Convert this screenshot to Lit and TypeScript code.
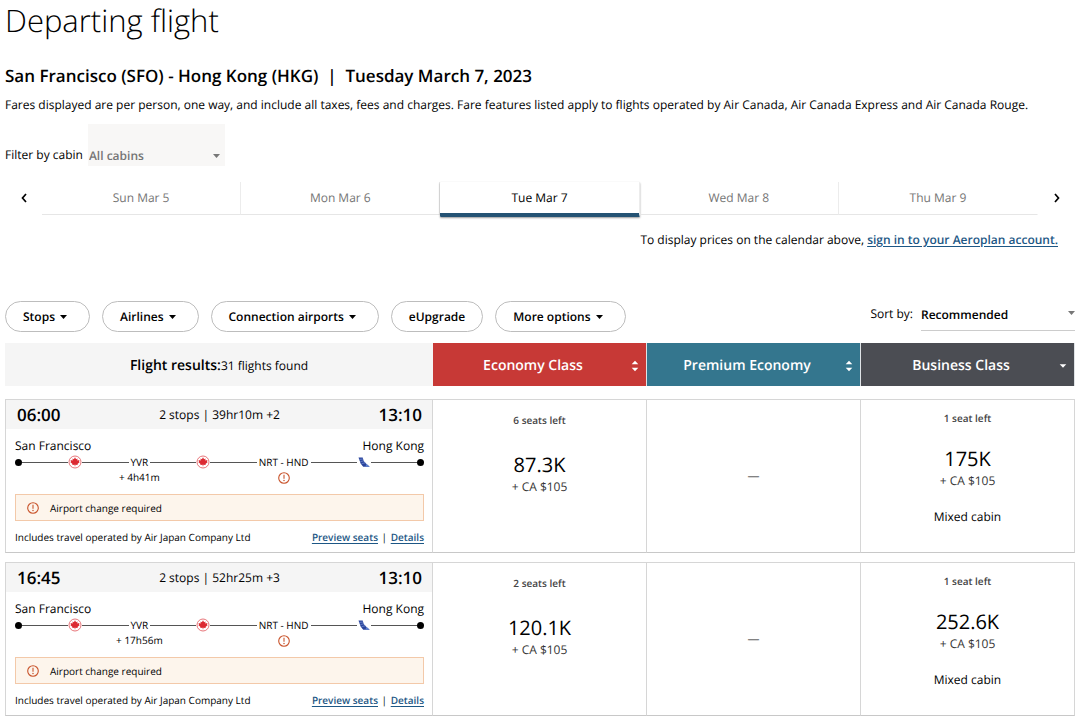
import { LitElement, html, css, svg, nothing } from "lit";
import { customElement, property, state } from "lit/decorators.js";
import { classMap } from "lit/directives/class-map.js";

interface Fare {
  seats: string;
  points: string;
  cash: string;
  mixed?: boolean;
}

interface Flight {
  depart: string;
  arrive: string;
  summary: string;
  layover: string;
  fares: (Fare | null)[];
}

const FLIGHTS: Flight[] = [
  {
    depart: "06:00",
    arrive: "13:10",
    summary: "2 stops | 39hr10m +2",
    layover: "+ 4h41m",
    fares: [
      { seats: "6 seats left", points: "87.3K", cash: "+ CA $105" },
      null,
      { seats: "1 seat left", points: "175K", cash: "+ CA $105", mixed: true },
    ],
  },
  {
    depart: "16:45",
    arrive: "13:10",
    summary: "2 stops | 52hr25m +3",
    layover: "+ 17h56m",
    fares: [
      { seats: "2 seats left", points: "120.1K", cash: "+ CA $105" },
      null,
      { seats: "1 seat left", points: "252.6K", cash: "+ CA $105", mixed: true },
    ],
  },
];

const DAYS = ["Sun Mar 5", "Mon Mar 6", "Tue Mar 7", "Wed Mar 8", "Thu Mar 9"];

const FILTERS = [
  { label: "Stops", menu: true },
  { label: "Airlines", menu: true },
  { label: "Connection airports", menu: true },
  { label: "eUpgrade", menu: false },
  { label: "More options", menu: true },
];

const CABINS = [
  { label: "Economy Class", tone: "economy", both: true },
  { label: "Premium Economy", tone: "premium", both: true },
  { label: "Business Class", tone: "business", both: false },
];

const caret = html`<svg class="caret" viewBox="0 0 7 4" width="7" height="4" aria-hidden="true">
  <path d="M0 0h7L3.5 4z" fill="currentColor" />
</svg>`;

const alertIcon = html`<svg class="alert" viewBox="0 0 12 12" width="12" height="12" aria-hidden="true">
  <circle cx="6" cy="6" r="5.3" fill="none" stroke="#c9542c" stroke-width="1.1" />
  <path d="M6 2.8v4" stroke="#c9542c" stroke-width="1.1" />
  <circle cx="6" cy="8.6" r=".75" fill="#c9542c" />
</svg>`;

const mapleIcon = html`<svg class="carrier" viewBox="0 0 14 14" width="14" height="14" role="img" aria-label="Air Canada">
  <circle cx="7" cy="7" r="6" fill="#fff" stroke="#e4666b" stroke-width=".9" />
  <path
    fill="#dc2a32"
    d="M7 2.2L8.100 4.300L9.500 3.400L9.300 5.500L11.500 4.900L10.900 6.400L11.800 7L9.500 9L9.700 10.100L7.300 9.700V11.300H6.700V9.700L4.300 10.100L4.500 9L2.200 7L3.100 6.400L2.500 4.900L4.700 5.500L4.500 3.400L5.900 4.300z"
  />
</svg>`;

const tailIcon = html`<svg class="carrier" viewBox="0 0 14 14" width="14" height="14" role="img" aria-label="ANA">
  <path d="M1.500 2.500h4.200l1 3.600 2.500 2.700 3.500 2.900H6.200L3.600 8.600z" fill="#2a449c" />
  <path d="M2.400 4.400l3.500-.4M3.300 6.600l3.600-.8M4.500 8.700l4-1" stroke="#8aa5e0" stroke-width=".6" />
  <path d="M9.200 8.800l3.500 2.900H8.600z" fill="#5b7fd0" />
</svg>`;

const base = css`
  * {
    box-sizing: border-box;
  }
  button,
  select {
    font: inherit;
    color: inherit;
    margin: 0;
    padding: 0;
    border: 0;
    border-radius: 0;
    background: none;
    cursor: pointer;
    text-rendering: inherit;
  }
  a {
    color: #1d5785;
    font-weight: 600;
    text-underline-offset: 2px;
  }
  svg {
    display: block;
    flex: none;
  }
`;

@customElement("flight-itinerary")
export class FlightItinerary extends LitElement {
  @property({ attribute: false }) flight!: Flight;

  static styles = [
    base,
    css`
      :host {
        display: block;
        font-size: 12px;
        line-height: 16px;
      }
      .times {
        display: grid;
        grid-template-columns: 1fr auto 1fr;
        align-items: center;
        height: 29px;
        padding: 0 10px 0 11px;
        background: #f5f5f5;
      }
      .clock {
        font-size: 17px;
        font-weight: 600;
      }
      .arrive {
        text-align: right;
      }
      .body {
        padding: 9px 8px 6px 9px;
      }
      .cities,
      .foot {
        display: flex;
        justify-content: space-between;
      }
      .route {
        display: flex;
        align-items: flex-start;
        height: 40px;
        font-size: 10px;
      }
      .carrier {
        margin-top: 1px;
      }
      .dot {
        flex: none;
        width: 7px;
        height: 7px;
        margin-top: 5px;
        border-radius: 50%;
        background: #000;
      }
      .line {
        flex: 1;
        height: 1px;
        margin-top: 8px;
        background: #555;
      }
      .stop {
        display: flex;
        flex-direction: column;
        align-items: center;
        padding: 0 2px;
        white-space: nowrap;
      }
      .layover {
        margin: -1px -20px 0;
      }
      .stop .alert {
        margin-top: 2px;
      }
      .notice {
        display: flex;
        align-items: center;
        gap: 11px;
        height: 27px;
        padding: 0 11px;
        border: 1px solid #f3c9a9;
        background: #fdf5ec;
        font-size: 10px;
      }
      .foot {
        margin-top: 8px;
        font-size: 10px;
      }
      .sep {
        padding: 0 1px;
      }
    `,
  ];

  render() {
    const f = this.flight;
    return html`
      <div class="times">
        <span class="clock">${f.depart}</span>
        <span>${f.summary}</span>
        <span class="clock arrive">${f.arrive}</span>
      </div>
      <div class="body">
        <div class="cities"><span>San Francisco</span><span>Hong Kong</span></div>
        <div class="route">
          <span class="dot"></span><span class="line"></span>${mapleIcon}<span class="line"></span>
          <span class="stop">YVR<span class="layover">${f.layover}</span></span>
          <span class="line"></span>${mapleIcon}<span class="line"></span>
          <span class="stop">NRT - HND${alertIcon}</span>
          <span class="line"></span>${tailIcon}<span class="line"></span><span class="dot"></span>
        </div>
        <div class="notice">${alertIcon}<span>Airport change required</span></div>
        <div class="foot">
          <span>Includes travel operated by Air Japan Company Ltd</span>
          <span><a href="#seats">Preview seats</a><span class="sep"> | </span><a href="#details">Details</a></span>
        </div>
      </div>
    `;
  }
}

@customElement("fare-offer")
export class FareOffer extends LitElement {
  @property({ attribute: false }) fare: Fare | null = null;

  static styles = [
    base,
    css`
      :host {
        display: block;
      }
      .offer {
        display: flex;
        flex-direction: column;
        align-items: center;
        width: 100%;
        padding-top: 12px;
      }
      .mixed {
        padding-top: 10px;
      }
      .seats {
        color: #444;
        font-size: 10px;
        font-weight: 600;
        line-height: 16px;
      }
      .points {
        margin-top: 23px;
        font-size: 20px;
        line-height: 28px;
      }
      .mixed .points {
        margin-top: 19px;
      }
      .cash {
        color: #333;
        font-size: 12px;
        line-height: 16px;
      }
      .cabin {
        margin-top: 20px;
        font-size: 12px;
        line-height: 16px;
      }
      .none {
        display: block;
        color: #666;
        font-size: 12px;
        text-align: center;
      }
    `,
  ];

  render() {
    const f = this.fare;
    if (!f) return html`<span class="none">—</span>`;
    return html`<button class=${classMap({ offer: true, mixed: !!f.mixed })}>
      <span class="seats">${f.seats}</span>
      <span class="points">${f.points}</span>
      <span class="cash">${f.cash}</span>
      ${f.mixed ? html`<span class="cabin">Mixed cabin</span>` : nothing}
    </button>`;
  }
}

@customElement("app-root")
export class AppRoot extends LitElement {
  @state() private day = 2;

  static styles = [
    base,
    css`
      :host {
        display: block;
        padding: 0 5px;
        background: #fff;
        color: #000;
        font-family: "Open Sans", "Noto Sans", sans-serif;
        font-size: 12px;
        line-height: 18px;
        text-rendering: geometricPrecision;
      }
      h1 {
        margin: 0;
        font-size: 31px;
        font-weight: 300;
        line-height: 42px;
      }
      h2 {
        margin: 22px 0 8px;
        font-size: 17px;
        font-weight: 600;
        line-height: 24px;
        white-space: pre-wrap;
      }
      p {
        margin: 0;
      }
      .cabin {
        display: flex;
        align-items: flex-end;
        gap: 5px;
        margin-top: 10px;
      }
      .cabin label {
        margin-bottom: 2px;
      }
      .picker {
        display: grid;
        align-items: center;
      }
      .picker > * {
        grid-area: 1 / 1;
      }
      .picker .caret {
        justify-self: end;
        pointer-events: none;
        color: #777;
      }
      select {
        appearance: none;
        width: 100%;
        font-weight: 600;
      }
      .cabin .picker {
        width: 137px;
      }
      .cabin select {
        height: 42px;
        padding: 22px 20px 0 1px;
        background: #f8f7f6;
        color: #757575;
      }
      .cabin .caret {
        margin: 22px 5px 0 0;
      }
      .calendar {
        display: flex;
        height: 35px;
        margin-top: 16px;
      }
      .arrow {
        display: grid;
        place-items: center;
        width: 37px;
        height: 32px;
      }
      .days {
        flex: 1;
        display: flex;
      }
      .day {
        flex: 1;
        height: 33px;
        border-bottom: 1px solid #e6e6e6;
        border-right: 1px solid #ececec;
        color: #757575;
      }
      .day:last-child {
        border-right-color: transparent;
      }
      .day.on {
        height: 35px;
        padding-top: 1px;
        border-bottom: 4px solid #245273;
        border-radius: 1px;
        color: #000;
        box-shadow: 0 1px 2px rgba(0, 0, 0, 0.4);
      }
      .signin {
        margin: 14px 17px 52px 0;
        text-align: right;
      }
      .tools {
        display: flex;
        justify-content: space-between;
        align-items: flex-start;
      }
      .chips {
        display: flex;
        gap: 12px;
      }
      .chip {
        display: flex;
        align-items: center;
        gap: 5px;
        height: 31px;
        padding: 0 17px;
        border: 1px solid #bdbdbd;
        border-radius: 16px;
        font-weight: 600;
      }
      .chip .caret {
        margin-right: 5px;
      }
      .sort {
        display: flex;
        gap: 8px;
      }
      .sort label {
        margin-top: 4px;
      }
      .sort .picker {
        width: 154px;
      }
      .sort select {
        height: 30px;
        padding: 0 12px 2px 0;
        border-bottom: 1px solid #ccc;
      }
      .sort .caret {
        margin-bottom: 6px;
      }
      table {
        width: 100%;
        margin-top: 2px;
        table-layout: fixed;
        border-collapse: separate;
        border-spacing: 0 9px;
      }
      th {
        padding: 0 0 4px;
        font-weight: 600;
      }
      th:first-child {
        width: 40%;
      }
      .count,
      .head {
        display: flex;
        align-items: center;
        justify-content: center;
        width: 100%;
        height: 43px;
        padding-top: 2px;
      }
      .count {
        background: #f5f5f5;
        font-weight: 400;
      }
      .count b {
        font-size: 14px;
        font-weight: 600;
      }
      .head {
        display: grid;
        grid-template-columns: 1fr 8px;
        padding-right: 7px;
        border-right: 1px solid #dfe3e6;
        color: #fff;
        font-size: 14px;
      }
      .head span {
        padding-left: 2px;
      }
      .economy {
        background: #c73936;
      }
      .premium {
        background: #34768e;
      }
      .business {
        background: #4b4d53;
      }
      td {
        height: 154px;
        padding: 0;
        border: solid #d6d6d6;
        border-width: 1px 1px 1px 0;
        border-bottom-color: #c8c8c8;
      }
      td:first-child {
        border-left-width: 1px;
        vertical-align: top;
      }
      td.priced {
        vertical-align: top;
      }
    `,
  ];

  private chevron(d: string) {
    return html`<svg viewBox="0 0 6 10" width="6" height="10" aria-hidden="true">
      <path d=${d} fill="none" stroke="#000" stroke-width="1.7" />
    </svg>`;
  }

  private sortMark(both: boolean) {
    return html`<svg viewBox="0 0 8 12" width="8" height="12" aria-hidden="true">
      ${both
        ? svg`<path d="M.7 4.300h6.600L4 .8zM.7 7.700h6.600L4 11.200z" fill="#fff" />`
        : svg`<path d="M.7 4.300h6.600L4 7.800z" fill="#fff" />`}
    </svg>`;
  }

  render() {
    return html`
      <h1>Departing flight</h1>
      <h2>San Francisco (SFO) - Hong Kong (HKG)  |  Tuesday March 7, 2023</h2>
      <p>
        Fares displayed are per person, one way, and include all taxes, fees and charges. Fare features listed apply to
        flights operated by Air Canada, Air Canada Express and Air Canada Rouge.
      </p>
      <div class="cabin">
        <label for="cabin">Filter by cabin</label>
        <div class="picker">
          <select id="cabin"><option>All cabins</option></select>${caret}
        </div>
      </div>
      <nav class="calendar" aria-label="Departure date">
        <button class="arrow" aria-label="Earlier dates">${this.chevron("M5 1L1.500 5L5 9")}</button>
        <div class="days">
          ${DAYS.map(
            (label, i) =>
              html`<button class=${classMap({ day: true, on: i === this.day })} @click=${() => (this.day = i)}>
                ${label}
              </button>`
          )}
        </div>
        <button class="arrow" aria-label="Later dates">${this.chevron("M1 1L4.500 5L1 9")}</button>
      </nav>
      <p class="signin">
        To display prices on the calendar above, <a href="#signin">sign in to your Aeroplan account.</a>
      </p>
      <div class="tools">
        <div class="chips">
          ${FILTERS.map((f) => html`<button class="chip">${f.label}${f.menu ? caret : nothing}</button>`)}
        </div>
        <div class="sort">
          <label for="sort">Sort by:</label>
          <div class="picker">
            <select id="sort"><option>Recommended</option></select>${caret}
          </div>
        </div>
      </div>
      <table>
        <thead>
          <tr>
            <th scope="col"><div class="count"><b>Flight results:</b>31 flights found</div></th>
            ${CABINS.map(
              (c) => html`<th scope="col">
                <button class="head ${c.tone}"><span>${c.label}</span>${this.sortMark(c.both)}</button>
              </th>`
            )}
          </tr>
        </thead>
        <tbody>
          ${FLIGHTS.map(
            (f) => html`<tr>
              <td><flight-itinerary .flight=${f}></flight-itinerary></td>
              ${f.fares.map(
                (fare) => html`<td class=${fare ? "priced" : "empty"}><fare-offer .fare=${fare}></fare-offer></td>`
              )}
            </tr>`
          )}
        </tbody>
      </table>
    `;
  }
}
